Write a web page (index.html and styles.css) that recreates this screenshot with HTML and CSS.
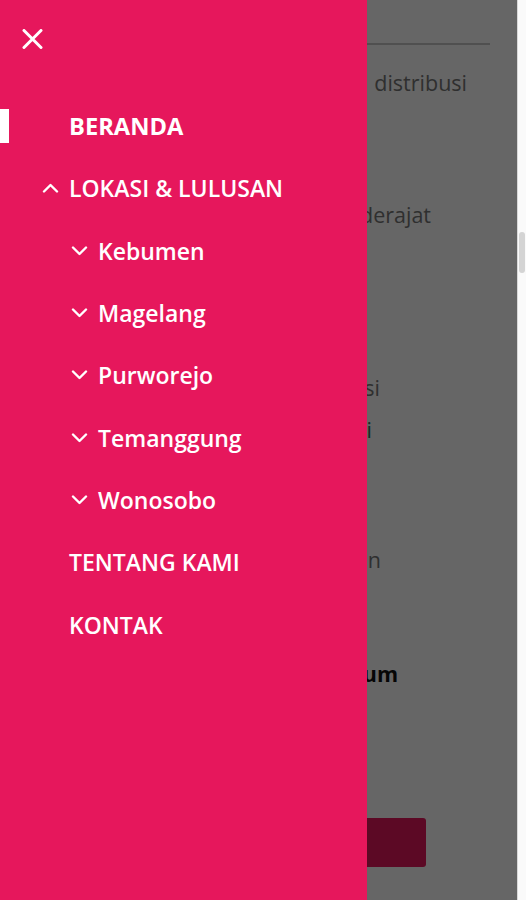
FILE: index.html
```html
<!DOCTYPE html>
<html lang="id">
<head>
<meta charset="utf-8">
<title>Lokasi & Lulusan</title>
<link rel="stylesheet" href="styles.css">
</head>
<body>
<div class="screen">
  <main class="page">
    <hr class="rule">
    <div class="ln ln-1">distribusi</div>
    <div class="ln ln-2">derajat</div>
    <div class="ln ln-3">lokasi</div>
    <div class="ln ln-4">di</div>
    <div class="ln ln-5">lulusan</div>
    <div class="ln ln-6 strong">umum</div>
    <div class="btn-row"><span class="btn"></span></div>
  </main>
  <div class="scrollbar"><div class="thumb"></div></div>
  <div class="overlay"></div>
  <nav class="drawer">
    <button class="close" aria-label="Tutup">
      <svg viewBox="0 0 21 20" width="21" height="20"><path d="M2 1.5 L19 18.5 M19 1.5 L2 18.5" stroke="#fff" stroke-width="3" stroke-linecap="round" fill="none"/></svg>
    </button>
    <ul class="menu">
      <li class="item active">BERANDA</li>
      <li class="item"><svg class="chev" viewBox="0 0 17 10" width="17" height="10"><path d="M2 8.5 L8.5 2 L15 8.5" stroke="#fff" stroke-width="2.4" fill="none" stroke-linecap="round" stroke-linejoin="round"/></svg>LOKASI &amp; LULUSAN</li>
      <li class="item sub"><svg class="chev" viewBox="0 0 17 10" width="17" height="10"><path d="M2 1.5 L8.5 8 L15 1.5" stroke="#fff" stroke-width="2.4" fill="none" stroke-linecap="round" stroke-linejoin="round"/></svg>Kebumen</li>
      <li class="item sub"><svg class="chev" viewBox="0 0 17 10" width="17" height="10"><path d="M2 1.5 L8.5 8 L15 1.5" stroke="#fff" stroke-width="2.4" fill="none" stroke-linecap="round" stroke-linejoin="round"/></svg>Magelang</li>
      <li class="item sub"><svg class="chev" viewBox="0 0 17 10" width="17" height="10"><path d="M2 1.5 L8.5 8 L15 1.5" stroke="#fff" stroke-width="2.4" fill="none" stroke-linecap="round" stroke-linejoin="round"/></svg>Purworejo</li>
      <li class="item sub"><svg class="chev" viewBox="0 0 17 10" width="17" height="10"><path d="M2 1.5 L8.5 8 L15 1.5" stroke="#fff" stroke-width="2.4" fill="none" stroke-linecap="round" stroke-linejoin="round"/></svg>Temanggung</li>
      <li class="item sub"><svg class="chev" viewBox="0 0 17 10" width="17" height="10"><path d="M2 1.5 L8.5 8 L15 1.5" stroke="#fff" stroke-width="2.4" fill="none" stroke-linecap="round" stroke-linejoin="round"/></svg>Wonosobo</li>
      <li class="item">TENTANG KAMI</li>
      <li class="item">KONTAK</li>
    </ul>
  </nav>
</div>
</body>
</html>
```
FILE: styles.css
```css
* { box-sizing: border-box; }
html, body { margin: 0; padding: 0; }
body {
  width: 526px;
  height: 900px;
  overflow: hidden;
  font-family: "Open Sans", "Noto Sans", sans-serif;
  background: #fff;
}
.screen {
  position: relative;
  display: flex;
  width: 526px;
  height: 900px;
}
.page {
  width: 517px;
  height: 900px;
  padding: 43px 27px 0 36px;
  color: #777;
  font-size: 21.5px;
  line-height: 30px;
}
.rule {
  margin: 0;
  border: 0;
  height: 2px;
  background: #c9c9c9;
}
.ln { white-space: nowrap; text-align: right; }
.ln-1 { margin-top: 23px; margin-right: 23px; }
.ln-2 { margin-top: 102px; margin-right: 59px; }
.ln-3 { margin-top: 143px; margin-right: 110px; }
.ln-4 { margin-top: 12px; margin-right: 118px; color: #3a6b5a; }
.ln-5 { margin-top: 100px; margin-right: 109px; }
.ln-6 { margin-top: 84px; margin-right: 92px; }
.strong { font-weight: 700; color: #111; }
.btn-row { margin-top: 129px; display: flex; justify-content: flex-end; padding-right: 64px; }
.btn {
  display: block;
  width: 120px;
  height: 49px;
  background: #e6175c;
  border-radius: 3px;
}
.scrollbar {
  width: 9px;
  height: 900px;
  border-left: 1px solid #d8d8d8;
  background: #fafafa;
  padding: 232px 1px 0 1px;
}
.thumb {
  height: 41px;
  background: #d4d4d4;
  border-radius: 3px;
}
.overlay {
  position: absolute;
  left: 0;
  top: 0;
  width: 517px;
  height: 900px;
  background: rgba(0, 0, 0, 0.6);
}
.drawer {
  position: absolute;
  left: 0;
  top: 0;
  width: 367px;
  height: 900px;
  background: #e6175c;
  color: #fff;
}
.close {
  display: block;
  margin: 29px 0 0 22px;
  padding: 0;
  border: 0;
  background: none;
  width: 21px;
  height: 20px;
}
.close svg { display: block; }
.menu {
  list-style: none;
  margin: 46px 0 0 0;
  padding: 0;
}
.item {
  position: relative;
  display: flex;
  align-items: center;
  height: 62.3px;
  padding-left: 69px;
  font-size: 23px;
  font-weight: 600;
  white-space: nowrap;
}
.item.sub { padding-left: 98px; }
.item.active { font-weight: 700; font-size: 23.7px; }
.item.active::before {
  content: "";
  position: absolute;
  left: 0;
  top: 14px;
  width: 9px;
  height: 34px;
  background: #fff;
}
.chev {
  flex: none;
  margin-left: -27px;
  margin-right: 10px;
}
```
